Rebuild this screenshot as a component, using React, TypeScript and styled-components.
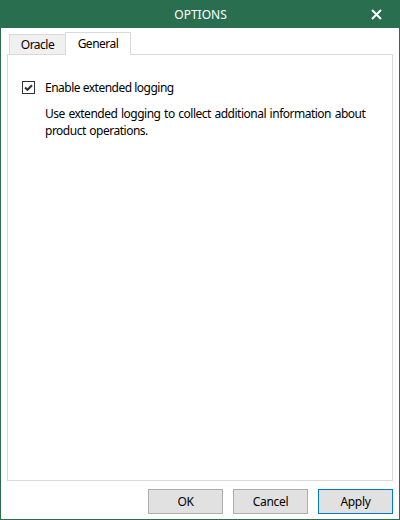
import React from "react";
import styled, { createGlobalStyle } from "styled-components";

const Global = createGlobalStyle`
  html, body { margin: 0; padding: 0; background: #ffffff; }
  * { box-sizing: border-box; }
`;

const GREEN = "#2a6e50";
const FONT = `"Segoe UI", "Noto Sans", "Open Sans", sans-serif`;

const Window = styled.div`
  width: 400px;
  height: 520px;
  display: flex;
  flex-direction: column;
  background: #ffffff;
  border: 1px solid ${GREEN};
  border-top: none;
  font-family: ${FONT};
  font-size: 12px;
  letter-spacing: -0.5px;
  color: #000;
`;

const TitleBar = styled.div`
  height: 28px;
  flex: none;
  background: ${GREEN};
  display: grid;
  grid-template-columns: 1fr auto 1fr;
  align-items: center;
  color: #fff;
`;

const Title = styled.div`
  grid-column: 2;
  font-size: 12px;
  letter-spacing: 0;
  padding-left: 1px;
`;

const CloseButton = styled.div`
  grid-column: 3;
  justify-self: end;
  width: 46px;
  height: 28px;
  display: flex;
  align-items: center;
  justify-content: center;
`;

const Content = styled.div`
  flex: 1;
  display: flex;
  flex-direction: column;
  padding: 4px 6px 5px 6px;
  min-height: 0;
`;

const TabStrip = styled.div`
  display: flex;
  align-items: flex-end;
  height: 23px;
  padding-left: 2px;
  margin-bottom: -1px;
  position: relative;
  z-index: 1;
`;

const Tab = styled.div<{ $active?: boolean }>`
  display: flex;
  align-items: center;
  justify-content: center;
  height: ${(p) => (p.$active ? "23px" : "21px")};
  width: ${(p) => (p.$active ? "66px" : "56px")};
  padding-bottom: ${(p) => (p.$active ? "1px" : "0px")};
  background: ${(p) => (p.$active ? "#ffffff" : "#f0f0f0")};
  border: 1px solid #d9d9d9;
  border-bottom: ${(p) => (p.$active ? "none" : "1px solid #d9d9d9")};
  border-right: ${(p) => (p.$active ? "1px solid #d9d9d9" : "none")};
  color: #000;
`;

const Panel = styled.div`
  flex: 1;
  border: 1px solid #d9d9d9;
  background: #ffffff;
  padding: 25px 14px 0 14px;
`;

const CheckRow = styled.label`
  display: flex;
  align-items: center;
  gap: 10px;
  height: 14px;
`;

const Box = styled.span`
  width: 13px;
  height: 13px;
  flex: none;
  border: 1px solid #333333;
  background: #ffffff;
  display: flex;
  align-items: center;
  justify-content: center;
`;

const Label = styled.span`
  line-height: 14px;
  padding-top: 1px;
`;

const Description = styled.p`
  margin: 11px 0 0 23px;
  line-height: 17px;
  width: 340px;
  word-spacing: 1px;
`;

const Footer = styled.div`
  display: flex;
  justify-content: flex-end;
  gap: 10px;
  padding-top: 8px;
`;

const Button = styled.button<{ $default?: boolean }>`
  width: 75px;
  height: 25px;
  font-family: ${FONT};
  font-size: 12px;
  letter-spacing: -0.3px;
  color: #000;
  background: #e1e1e1;
  border: 1px solid ${(p) => (p.$default ? "#0078d7" : "#adadad")};
  padding: 0 0 1px 0;
  margin: 0;
`;

export default function App() {
  return (
    <>
      <Global />
      <Window>
        <TitleBar>
          <Title>OPTIONS</Title>
          <CloseButton>
            <svg width="11" height="11" viewBox="0 0 11 11">
              <path d="M1 1 L10 10 M10 1 L1 10" stroke="#fff" strokeWidth="2" />
            </svg>
          </CloseButton>
        </TitleBar>
        <Content>
          <TabStrip>
            <Tab>Oracle</Tab>
            <Tab $active>General</Tab>
          </TabStrip>
          <Panel>
            <CheckRow>
              <Box>
                <svg width="11" height="11" viewBox="0 0 11 11">
                  <path d="M2 5.5 L4.5 7.8 L9 3.2" fill="none" stroke="#333" strokeWidth="2" />
                </svg>
              </Box>
              <Label>Enable extended logging</Label>
            </CheckRow>
            <Description>
              Use extended logging to collect additional information about product operations.
            </Description>
          </Panel>
          <Footer>
            <Button>OK</Button>
            <Button>Cancel</Button>
            <Button $default>Apply</Button>
          </Footer>
        </Content>
      </Window>
    </>
  );
}
